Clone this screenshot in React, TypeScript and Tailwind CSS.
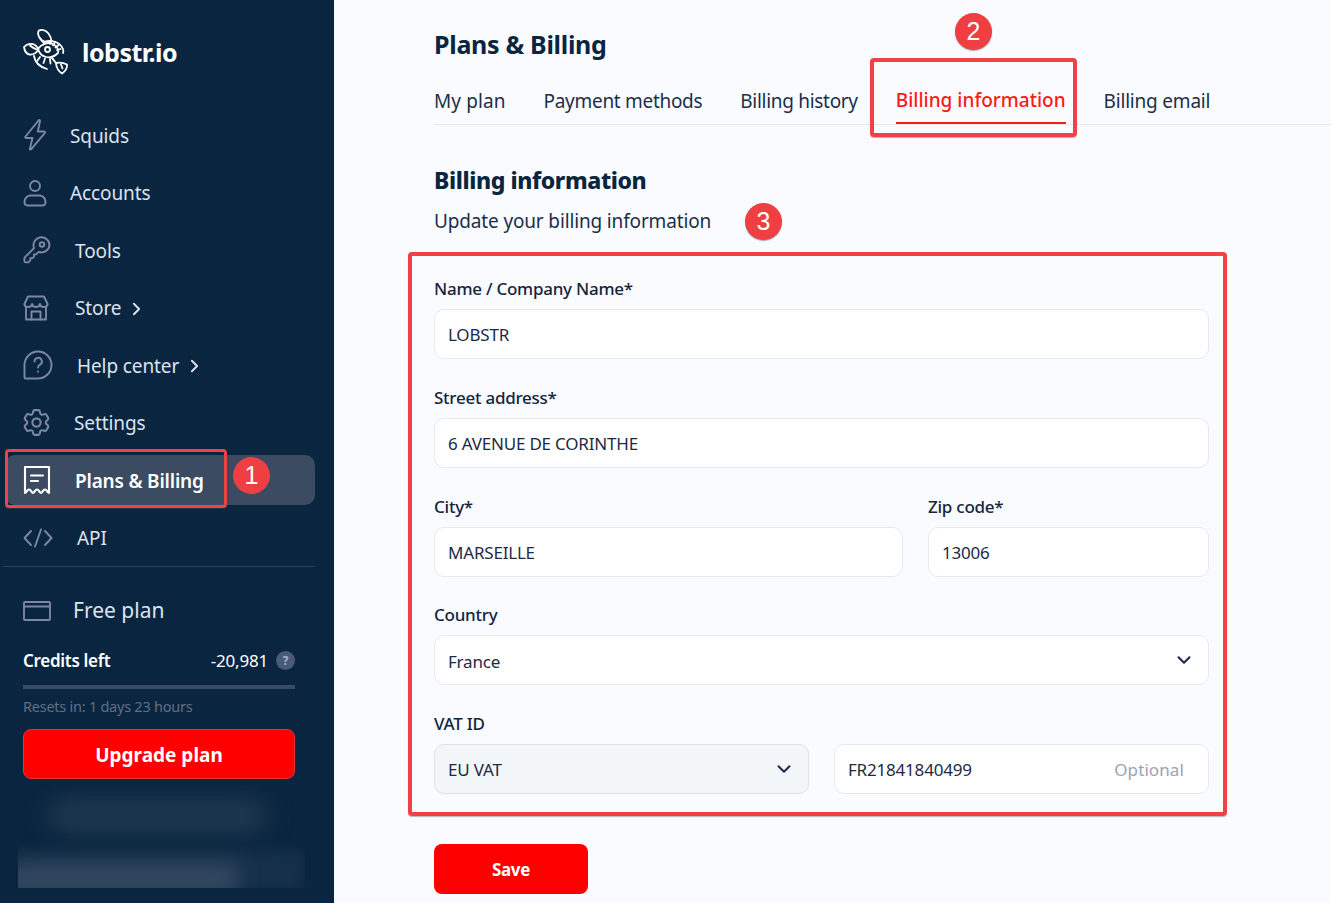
import { ChevronDown } from "lucide-react";
import { HiOutlineCog6Tooth } from "react-icons/hi2";
import type { ReactNode } from "react";

const strokeIcon = "fill-none stroke-[#7d86a3] stroke-[1.9] [stroke-linecap:round] [stroke-linejoin:round]";

function LobsterLogo() {
  return (
    <svg viewBox="0 0 46 46" className="w-[46px] h-[46px] fill-none stroke-white stroke-[1.8] [stroke-linecap:round] [stroke-linejoin:round]">
      <path d="M16 1.500c3-1.500 7 0 9.500 3 2 2.500 3 6 3 8.500-4 .5-9-.5-11.500-3.500-2-2.500-2.500-6.500-1-8z" />
      <path d="M17 9c1 2 2 3 4 5" />
      <path d="M1 18c3-3.500 8-4 11-2 1.500 1 3 3 3.500 5-2.500 3-6 5-9 4.500-3-.5-5-4-5.500-7.500z" />
      <path d="M7 16.500c2 2 4 3 8 4.500" />
      <path d="M21 13c7-3 16 0 19 7 .5 1.500 .5 3 0 4" />
      <path d="M15 20c3-5 10-7 15-5 4 2 6 6 5 9-3 3-8 5-12 4-4-1-7-4-8-8z" />
      <circle cx="24.500" cy="20.500" r="2.500" />
      <path d="M28 11.500l-1 3.500M32 13l-2 3.500M35.500 16l-3 2.500M37.500 20l-3.500 1" />
      <path d="M11 27c1 6 6 11 13 13" />
      <path d="M17 28l-2.500 3.500M22 29.500l-1.500 4.500M27 30l.5 4.500" />
      <path d="M28 28c2 2 3.500 4 5 6" />
      <path d="M33 34c3-.5 7-.5 11 1.500.5 3-1.500 7-5 9-3-1.500-6-6-6-10.500z" />
      <path d="M38 35.500l1.500 4" />
    </svg>
  );
}

const BoltIcon = () => (
  <svg viewBox="0 0 24 34" className={`w-[24px] h-[34px] ${strokeIcon}`}>
    <path d="M15.500 2.500 2.500 18.500c-.6.8-.2 1.500.7 1.500h6.300l-2.600 10.500c-.3 1.200.7 1.500 1.400.7L21.800 15c.6-.8.2-1.500-.7-1.500h-6.300l2.200-10.300c.2-1.200-.8-1.500-1.500-.7z" />
  </svg>
);
const UserIcon = () => (
  <svg viewBox="0 0 24 30" className={`w-[24px] h-[30px] ${strokeIcon}`}>
    <circle cx="12" cy="8" r="5" />
    <path d="M1.500 24c0-4 3-6.500 6-6.500h9c3 0 6 2.500 6 6.500 0 2.500-1 3.500-3 3.500H4.500c-2 0-3-1-3-3.500z" />
  </svg>
);
const KeyIcon = () => (
  <svg viewBox="0 0 28 28" className={`w-[28px] h-[28px] ${strokeIcon}`}>
    <path d="M26.500 9.500a8 8 0 1 0-15.500 2.600L2 21.200c-.4.4-.6.900-.6 1.400v2.500c0 .7.600 1.300 1.300 1.300h2.600l2-2v-2.300h2.300l1.400-1.500v-2.200h2.200l2.500-2.500a8 8 0 0 0 10.800-6.900z" />
    <circle cx="19" cy="8.500" r="2.300" />
  </svg>
);
const StoreIcon = () => (
  <svg viewBox="0 0 26 26" className={`w-[26px] h-[26px] ${strokeIcon}`}>
    <path d="M1.500 9 5 1.500h16L24.500 9" />
    <path d="M1.500 9c0 2 2 3 3.800 3s3.500-1 3.800-3c.3 2 2 3 3.900 3s3.600-1 3.900-3c.3 2 2 3 3.800 3s3.800-1 3.800-3" />
    <path d="M3 12v12.500h20V12" />
    <path d="M8.500 24.500v-8h9v8" />
  </svg>
);
const HelpIcon = () => (
  <svg viewBox="0 0 30 30" className={`w-[30px] h-[30px] ${strokeIcon}`}>
    <path d="M15 1.500a13.500 13.500 0 0 1 0 27H2.500c-.6 0-1-.4-1-1V15A13.500 13.500 0 0 1 15 1.500z" />
    <path d="M11.500 11.500a3.700 3.700 0 1 1 5.500 3.200c-1.200.7-2 1.500-2 2.800" />
    <path d="M15 21.500v.2" />
  </svg>
);
const GearIcon = () => <HiOutlineCog6Tooth className="w-[33px] h-[33px] -ml-[3px] text-[#7d86a3]" />;
const ReceiptIcon = () => (
  <svg viewBox="0 0 28 30" className="w-[28px] h-[30px] fill-none stroke-white stroke-[2.1] [stroke-linecap:round] [stroke-linejoin:round]">
    <path d="M2 2h24v26c-1.500 0-2-3.500-4-3.500s-2.500 3.500-4 3.500-2-3.500-4-3.500-2.500 3.500-4 3.500-2-3.500-4-3.500-2.500 3.500-4 3.500z" />
    <path d="M8 10.500h12M8 16h7" />
  </svg>
);
const CodeIcon = () => (
  <svg viewBox="0 0 30 20" className={`w-[30px] h-[20px] ${strokeIcon}`}>
    <path d="M8 3 1.500 10 8 17M22 3l6.500 7-6.500 7M18 1.500 12 18.500" />
  </svg>
);
const CardIcon = () => (
  <svg viewBox="0 0 28 20" className={`w-[28px] h-[20px] ${strokeIcon}`}>
    <rect x="1" y="1" width="26" height="18" rx="1" />
    <path d="M1 5.500h26" />
  </svg>
);
const SmallChevron = () => (
  <svg viewBox="0 0 10 16" className="w-[9px] h-[14px] ml-[11px] mt-[2px] fill-none stroke-[#dbe3ef] stroke-[2.2] [stroke-linecap:round] [stroke-linejoin:round]">
    <path d="M2 2l6 6-6 6" />
  </svg>
);

type NavItem = { label: string; icon: ReactNode; gap: string; chevron?: boolean; active?: boolean };

const navItems: NavItem[] = [
  { label: "Squids", icon: <BoltIcon />, gap: "w-[47px]" },
  { label: "Accounts", icon: <UserIcon />, gap: "w-[47px]" },
  { label: "Tools", icon: <KeyIcon />, gap: "w-[52px]" },
  { label: "Store", icon: <StoreIcon />, gap: "w-[52px]", chevron: true },
  { label: "Help center", icon: <HelpIcon />, gap: "w-[54px]", chevron: true },
  { label: "Settings", icon: <GearIcon />, gap: "w-[51px]" },
  { label: "Plans & Billing", icon: <ReceiptIcon />, gap: "w-[52px]", active: true },
  { label: "API", icon: <CodeIcon />, gap: "w-[54px]" },
];

function Sidebar() {
  return (
    <aside className="w-[334px] h-[903px] shrink-0 bg-[#0a2540] flex flex-col overflow-hidden">
      <div className="h-[110px] pl-[23px] pt-[29px] flex items-start gap-[13px]">
        <LobsterLogo />
        <span className="text-[25px] leading-[46px] font-bold text-white tracking-[-0.5px]">lobstr.io</span>
      </div>
      <nav className="flex flex-col pl-[5px] pr-[19px]">
        {navItems.map((item) => (
          <a
            key={item.label}
            className={`h-[50px] mb-[7.5px] last:mb-0 rounded-[10px] flex items-center text-[19px] tracking-[-0.1px] ${item.active ? "bg-[#3b4c62] text-white font-semibold !tracking-[-0.2px]" : "text-[#dbe3ef]"}`}
          >
            <span className={`${item.gap} ml-[18px] shrink-0 flex items-center`}>{item.icon}</span>
            <span className="pt-[2px]">{item.label}</span>
            {item.chevron && <SmallChevron />}
          </a>
        ))}
      </nav>
      <div className="ml-[3px] mr-[19px] mt-[3px] border-t border-[#2a405a]" />
      <div className="mt-[32px] pl-[23px] pr-[39px] flex flex-col">
        <div className="flex items-center h-[24px] text-[21px] text-[#dbe3ef]">
          <span className="w-[50px] flex items-center"><CardIcon /></span>
          Free plan
        </div>
        <div className="mt-[26px] h-[24px] flex items-center justify-between text-white text-[17px]">
          <span className="font-semibold tracking-[-0.3px]">Credits left</span>
          <span className="flex items-center gap-[8px] tracking-[-0.2px]">
            -20,981
            <span className="w-[19px] h-[19px] rounded-full bg-[#4a5a78] text-[#a9b4cc] text-[12px] font-bold flex items-center justify-center">?</span>
          </span>
        </div>
        <div className="mt-[12px] h-[4px] bg-[#3b4c62]" />
        <div className="mt-[7px] text-[14.5px] leading-[20px] text-[#5f7085] tracking-[-0.25px]">Resets in: 1 days 23 hours</div>
        <button className="mt-[13px] h-[50px] pt-[3px] rounded-[8px] bg-[#ff0000] border border-[#e8323c] text-white text-[19px] font-bold">Upgrade plan</button>
      </div>
      <div className="relative ml-[18px] mt-[6px] w-[287px] h-[103px] overflow-hidden">
        <div className="absolute left-[30px] top-[14px] w-[220px] h-[34px] rounded-full bg-[#20394f] blur-[12px]" />
        <div className="absolute left-0 right-0 top-[66px] h-[40px] bg-[#16304b] blur-[8px]" />
        <div className="absolute left-[-20px] top-[78px] w-[240px] h-[34px] bg-[#33475f] blur-[10px]" />
      </div>
    </aside>
  );
}

function Field({ label, children, className = "" }: { label: string; children: ReactNode; className?: string }) {
  return (
    <div className={`flex flex-col ${className}`}>
      <label className="h-[22px] leading-[22px] text-[17px] font-medium text-[#14253d] tracking-[-0.25px]">{label}</label>
      <div className="mt-[-2px] pt-[11px]">{children}</div>
    </div>
  );
}

function Input({ value, children, muted }: { value: string; children?: ReactNode; muted?: boolean }) {
  return (
    <div className={`h-[50px] rounded-[10px] border pl-[13px] pr-[13px] pt-[2px] flex items-center justify-between text-[17px] text-[#1b2b44] tracking-[-0.2px] ${muted ? "bg-[#f3f6f9] border-[#dde2ea]" : "bg-white border-[#e5e9f0]"}`}>
      <span>{value}</span>
      {children}
    </div>
  );
}

const tabs = [
  { label: "My plan", spacing: "tracking-[0.1px]" },
  { label: "Payment methods", spacing: "tracking-[-0.3px]" },
  { label: "Billing history", spacing: "tracking-[-0.3px]" },
  { label: "Billing information", spacing: "tracking-[0px]", active: true },
  { label: "Billing email", spacing: "tracking-[-0.2px]" },
];

function Badge({ n, className }: { n: number; className: string }) {
  return (
    <span className={`absolute w-[37px] h-[37px] rounded-full bg-[#ef3f43] text-white text-[25px] leading-none flex items-center justify-center shadow-[0_1px_1px_rgba(80,80,80,0.5)] font-['Liberation_Sans',sans-serif] ${className}`}>
      {n}
    </span>
  );
}

export default function App() {
  return (
    <div className="relative w-[1331px] h-[903px] overflow-hidden flex bg-[#f9fbff] font-['Noto_Sans',sans-serif]">
      <Sidebar />
      <main className="pl-[100px] w-[875px] flex flex-col">
        <h1 className="mt-[26px] h-[36px] leading-[36px] text-[25px] font-bold text-[#0a2540] tracking-[-0.3px]">Plans &amp; Billing</h1>
        <div className="mt-[21px] h-[42px] w-[897px] border-b border-[#e6e9ef] flex gap-[38px] text-[19px] text-[#1b2f4b]">
          {tabs.map((tab) => (
            <span
              key={tab.label}
              className={`h-[41px] leading-[30px] ${tab.spacing} ${tab.active ? "pt-[2px] text-[#ff1a1a] font-medium border-b-2 border-[#ff1a1a]" : "pt-[3px]"}`}
            >
              {tab.label}
            </span>
          ))}
        </div>
        <h2 className="mt-[40px] h-[30px] leading-[30px] text-[23px] font-extrabold text-[#0a2540] tracking-[-0.4px]">Billing information</h2>
        <p className="mt-[11px] h-[30px] leading-[30px] text-[19px] text-[#1b2f4b] tracking-[-0.15px]">Update your billing information</p>
        <form className="mt-[42px] w-[775px] flex flex-col gap-[27.75px]">
          <Field label="Name / Company Name*"><Input value="LOBSTR" /></Field>
          <Field label="Street address*"><Input value="6 AVENUE DE CORINTHE" /></Field>
          <div className="grid grid-cols-[469px_281px] gap-[25px]">
            <Field label="City*"><Input value="MARSEILLE" /></Field>
            <Field label="Zip code*"><Input value="13006" /></Field>
          </div>
          <Field label="Country">
            <Input value="France"><ChevronDown className="w-[22px] h-[22px] mb-[3px] text-[#1b2b44]" strokeWidth={2.2} /></Input>
          </Field>
          <Field label="VAT ID">
            <div className="grid grid-cols-[375px_375px] gap-[25px]">
              <Input value="EU VAT" muted><ChevronDown className="w-[22px] h-[22px] mb-[3px] text-[#1b2b44]" strokeWidth={2.2} /></Input>
              <Input value="FR21841840499"><span className="text-[#9aa3b2] mr-[11px] tracking-[0.1px]">Optional</span></Input>
            </div>
          </Field>
        </form>
        <button className="mt-[50px] w-[154px] h-[50px] pt-[2px] rounded-[8px] bg-[#ff0000] text-white text-[17px] font-bold tracking-[-0.3px]">Save</button>
      </main>

      {/* screenshot annotations */}
      <div className="absolute left-[5px] top-[449px] w-[222px] h-[59px] rounded-[4px] border-[3px] border-[#ef4146] shadow-[0_1px_1px_rgba(80,80,80,0.4)]" />
      <div className="absolute left-[870px] top-[58px] w-[207px] h-[79px] rounded-[4px] border-[4px] border-[#ef4146] shadow-[0_1px_1px_rgba(80,80,80,0.4)]" />
      <div className="absolute left-[408px] top-[252px] w-[819px] h-[564px] rounded-[4px] border-[4px] border-[#ef4146] shadow-[0_1px_1px_rgba(80,80,80,0.4)]" />
      <Badge n={1} className="left-[233px] top-[457px]" />
      <Badge n={2} className="left-[955px] top-[13px]" />
      <Badge n={3} className="left-[745px] top-[203px]" />
    </div>
  );
}
